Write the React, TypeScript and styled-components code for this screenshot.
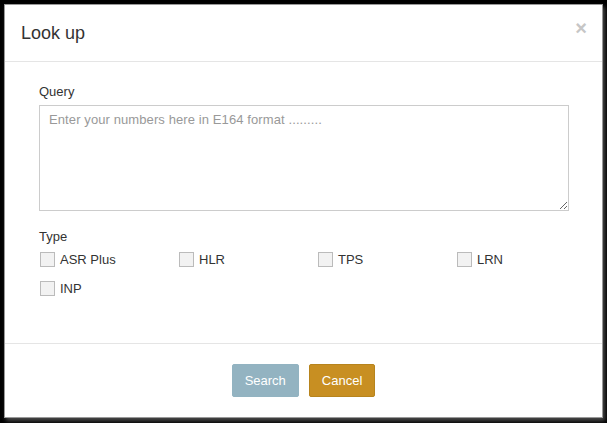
import React from 'react';
import styled, { createGlobalStyle } from 'styled-components';

const GlobalStyle = createGlobalStyle`
  html, body {
    margin: 0;
    padding: 0;
    background: #000;
    font-family: "Liberation Sans", Arial, sans-serif;
  }
`;

const Backdrop = styled.div`
  padding: 4px 4px 0 4px;
  height: 423px;
  box-sizing: border-box;
`;

const Dialog = styled.div`
  width: 599px;
  height: 414px;
  box-sizing: border-box;
  background: #fff;
  border: 1px solid #999;
  box-shadow: 2px 3px 4px rgba(120, 120, 120, 0.6);
  display: flex;
  flex-direction: column;
`;

const Header = styled.div`
  display: flex;
  align-items: center;
  justify-content: space-between;
  height: 56px;
  padding: 0 15px 0 16px;
  border-bottom: 1px solid #e5e5e5;
`;

const Title = styled.h4`
  margin: 0;
  font-size: 18px;
  font-weight: normal;
  color: #333;
`;

const Close = styled.button`
  border: 0;
  background: none;
  padding: 0;
  font-family: "Liberation Sans", Arial, sans-serif;
  font-size: 20px;
  font-weight: bold;
  line-height: 1;
  color: #c6c6c6;
  margin-top: -10px;
  cursor: pointer;
`;

const Body = styled.div`
  flex: 1;
  padding: 21px 33px 0 34px;
`;

const Label = styled.div`
  font-size: 13px;
  color: #333;
  line-height: 18px;
  margin-bottom: 4px;
`;

const TextArea = styled.textarea`
  display: block;
  width: 100%;
  height: 106px;
  box-sizing: border-box;
  border: 1px solid #ccc;
  padding: 6px 9px;
  font-family: "Liberation Sans", Arial, sans-serif;
  font-size: 13px;
  color: #555;
  resize: vertical;
  margin-bottom: 17px;
  &::placeholder {
    color: #999;
    letter-spacing: 0.1px;
  }
`;

const Options = styled.div`
  display: grid;
  grid-template-columns: repeat(4, 139px);
  row-gap: 11px;
  margin-top: 3px;
`;

const Option = styled.label`
  display: flex;
  align-items: center;
  gap: 5px;
  font-size: 13px;
  color: #333;
  height: 18px;
`;

const Box = styled.span`
  width: 15px;
  height: 15px;
  margin-left: 1px;
  border: 1px solid #bbb;
  background: #f2f2f2;
  box-sizing: border-box;
`;

const Footer = styled.div`
  height: 74px;
  box-sizing: border-box;
  border-top: 1px solid #e5e5e5;
  display: flex;
  justify-content: center;
  align-items: center;
  gap: 10px;
  padding-bottom: 1px;
`;

const Button = styled.button<{ $tone: 'search' | 'cancel' }>`
  height: 33px;
  padding: 0 12px;
  border-radius: 2px;
  font-family: "Liberation Sans", Arial, sans-serif;
  font-size: 13px;
  color: #fff;
  border: 1px solid ${p => (p.$tone === 'search' ? '#92b3c1' : '#b7841d')};
  background: ${p => (p.$tone === 'search' ? '#93b3c1' : '#c88f22')};
  cursor: pointer;
`;

const types = ['ASR Plus', 'HLR', 'TPS', 'LRN', 'INP'];

export default function App() {
  return (
    <>
      <GlobalStyle />
      <Backdrop>
        <Dialog>
          <Header>
            <Title>Look up</Title>
            <Close aria-label="Close">×</Close>
          </Header>
          <Body>
            <Label>Query</Label>
            <TextArea placeholder="Enter your numbers here in E164 format ........." />
            <Label>Type</Label>
            <Options>
              {types.map(t => (
                <Option key={t}>
                  <Box />
                  {t}
                </Option>
              ))}
            </Options>
          </Body>
          <Footer>
            <Button $tone="search">Search</Button>
            <Button $tone="cancel">Cancel</Button>
          </Footer>
        </Dialog>
      </Backdrop>
    </>
  );
}
